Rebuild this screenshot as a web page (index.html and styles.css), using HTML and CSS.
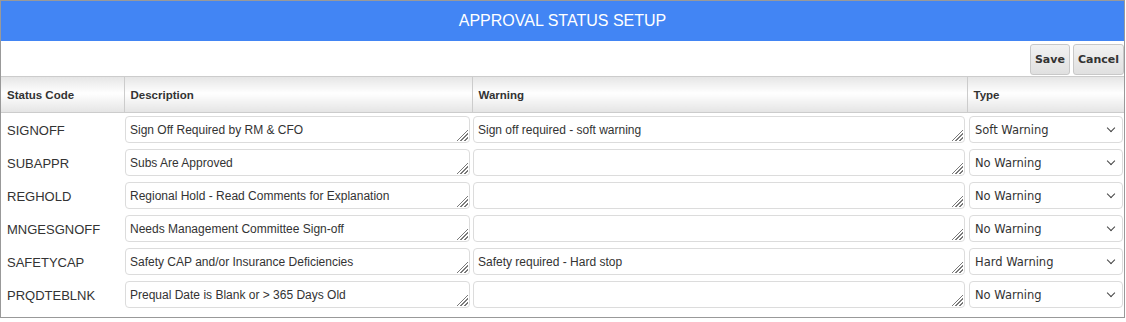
FILE: index.html
```
<!DOCTYPE html>
<html lang="en">

<head>
    <meta charset="UTF-8">
    <meta name="viewport" content="width=device-width, initial-scale=1.0">
    <title>Approval Status Setup</title>
    <link rel="stylesheet" href="styles.css">
</head>

<body>
    <div class="panel">
        <div class="panel-title">APPROVAL STATUS SETUP</div>
        <div class="toolbar">
            <button class="btn">Save</button>
            <button class="btn">Cancel</button>
        </div>
        <table class="grid">
            <colgroup>
                <col class="col-code">
                <col class="col-desc">
                <col class="col-warn">
                <col class="col-type">
            </colgroup>
            <thead>
                <tr>
                    <th>Status Code</th>
                    <th>Description</th>
                    <th>Warning</th>
                    <th>Type</th>
                </tr>
            </thead>
            <tbody>
                <tr>
                    <td class="code">SIGNOFF</td>
                    <td><span class="field"><textarea>Sign Off Required by RM &amp; CFO</textarea></span></td>
                    <td><span class="field"><textarea>Sign off required - soft warning</textarea></span></td>
                    <td><span class="select-wrap"><select><option>Soft Warning</option><option>No Warning</option><option>Hard Warning</option></select></span></td>
                </tr>
                <tr>
                    <td class="code">SUBAPPR</td>
                    <td><span class="field"><textarea>Subs Are Approved</textarea></span></td>
                    <td><span class="field"><textarea></textarea></span></td>
                    <td><span class="select-wrap"><select><option>No Warning</option><option>Soft Warning</option><option>Hard Warning</option></select></span></td>
                </tr>
                <tr>
                    <td class="code">REGHOLD</td>
                    <td><span class="field"><textarea>Regional Hold - Read Comments for Explanation</textarea></span></td>
                    <td><span class="field"><textarea></textarea></span></td>
                    <td><span class="select-wrap"><select><option>No Warning</option><option>Soft Warning</option><option>Hard Warning</option></select></span></td>
                </tr>
                <tr>
                    <td class="code">MNGESGNOFF</td>
                    <td><span class="field"><textarea>Needs Management Committee Sign-off</textarea></span></td>
                    <td><span class="field"><textarea></textarea></span></td>
                    <td><span class="select-wrap"><select><option>No Warning</option><option>Soft Warning</option><option>Hard Warning</option></select></span></td>
                </tr>
                <tr>
                    <td class="code">SAFETYCAP</td>
                    <td><span class="field"><textarea>Safety CAP and/or Insurance Deficiencies</textarea></span></td>
                    <td><span class="field"><textarea>Safety required - Hard stop</textarea></span></td>
                    <td><span class="select-wrap"><select><option>Hard Warning</option><option>No Warning</option><option>Soft Warning</option></select></span></td>
                </tr>
                <tr>
                    <td class="code">PRQDTEBLNK</td>
                    <td><span class="field"><textarea>Prequal Date is Blank or &gt; 365 Days Old</textarea></span></td>
                    <td><span class="field"><textarea></textarea></span></td>
                    <td><span class="select-wrap"><select><option>No Warning</option><option>Soft Warning</option><option>Hard Warning</option></select></span></td>
                </tr>
            </tbody>
        </table>
    </div>
</body>

</html>
```

FILE: styles.css
```
body {
    margin: 0;
    font-family: "Liberation Sans", Arial, sans-serif;
    color: #333;
    background-color: white;
}

.panel {
    width: 1125px;
    height: 318px;
    box-sizing: border-box;
    border: 1px solid #999;
    background-color: white;
}

.panel-title {
    height: 40px;
    line-height: 40px;
    background-color: #4285f4;
    color: white;
    text-align: center;
    font-size: 16px;
}

.toolbar {
    display: flex;
    justify-content: flex-end;
    gap: 3px;
    padding: 3px 0px 1px 0px;
    height: 31px;
}

.btn {
    height: 31px;
    padding: 0px 4px;
    border: 1px solid #c8c8c8;
    border-radius: 3px;
    background: linear-gradient(#f2f2f2, #e0e0e0);
    font-family: "DejaVu Sans", Tahoma, sans-serif;
    font-weight: bold;
    font-size: 11px;
    color: #333;
}

.grid {
    width: 1123px;
    border-collapse: collapse;
    table-layout: fixed;
}

.col-code {
    width: 123px;
}

.col-desc {
    width: 348px;
}

.col-warn {
    width: 495px;
}

.col-type {
    width: 157px;
}

.grid th {
    height: 35px;
    text-align: left;
    padding: 0px 6px;
    font-size: 11.5px;
    font-weight: bold;
    color: #333;
    border-top: 1px solid #ccc;
    border-bottom: 1px solid #ccc;
    border-left: 1px solid #ccc;
    background: linear-gradient(#e6e6e6, #ffffff 45%, #e4e4e4);
}

.grid th:first-child {
    border-left: none;
}

.grid td {
    padding: 3px 2px 3px 1px;
    height: 27px;
    vertical-align: middle;
}

.grid td.code {
    padding: 4px 2px 2px 6px;
    font-size: 13px;
}

.field {
    position: relative;
    display: block;
}

/* poignée de redimensionnement dessinée à la main */
.field::after {
    content: "";
    position: absolute;
    right: 2px;
    bottom: 2px;
    width: 13px;
    height: 13px;
    background: repeating-linear-gradient(135deg, #fff 0px, #fff 1.5px, #7a7a7a 1.5px, #7a7a7a 2.8px);
    clip-path: polygon(100% 0, 100% 100%, 0 100%);
    pointer-events: none;
}

.grid textarea {
    display: block;
    width: 100%;
    height: 27px;
    box-sizing: border-box;
    margin: 0px;
    padding: 6px 4px 4px 4px;
    border: 1px solid #dcdcdc;
    border-radius: 4px;
    font-family: "Liberation Sans", Arial, sans-serif;
    font-size: 12px;
    line-height: 15px;
    color: #333;
    overflow: hidden;
    outline: none;
    resize: none;
}

.select-wrap {
    position: relative;
    display: block;
}

.select-wrap::after {
    content: "";
    position: absolute;
    right: 8px;
    top: 9px;
    width: 5px;
    height: 5px;
    border-right: 1.3px solid #444;
    border-bottom: 1.3px solid #444;
    transform: rotate(45deg);
    pointer-events: none;
}

.grid select {
    display: block;
    width: 100%;
    height: 27px;
    box-sizing: border-box;
    margin: 0px 0px 0px 1px;
    padding: 0px 5px;
    border: 1px solid #dcdcdc;
    border-radius: 4px;
    background-color: white;
    appearance: none;
    font-family: "DejaVu Sans", Verdana, sans-serif;
    font-size: 11.5px;
    color: #333;
    outline: none;
}
```
